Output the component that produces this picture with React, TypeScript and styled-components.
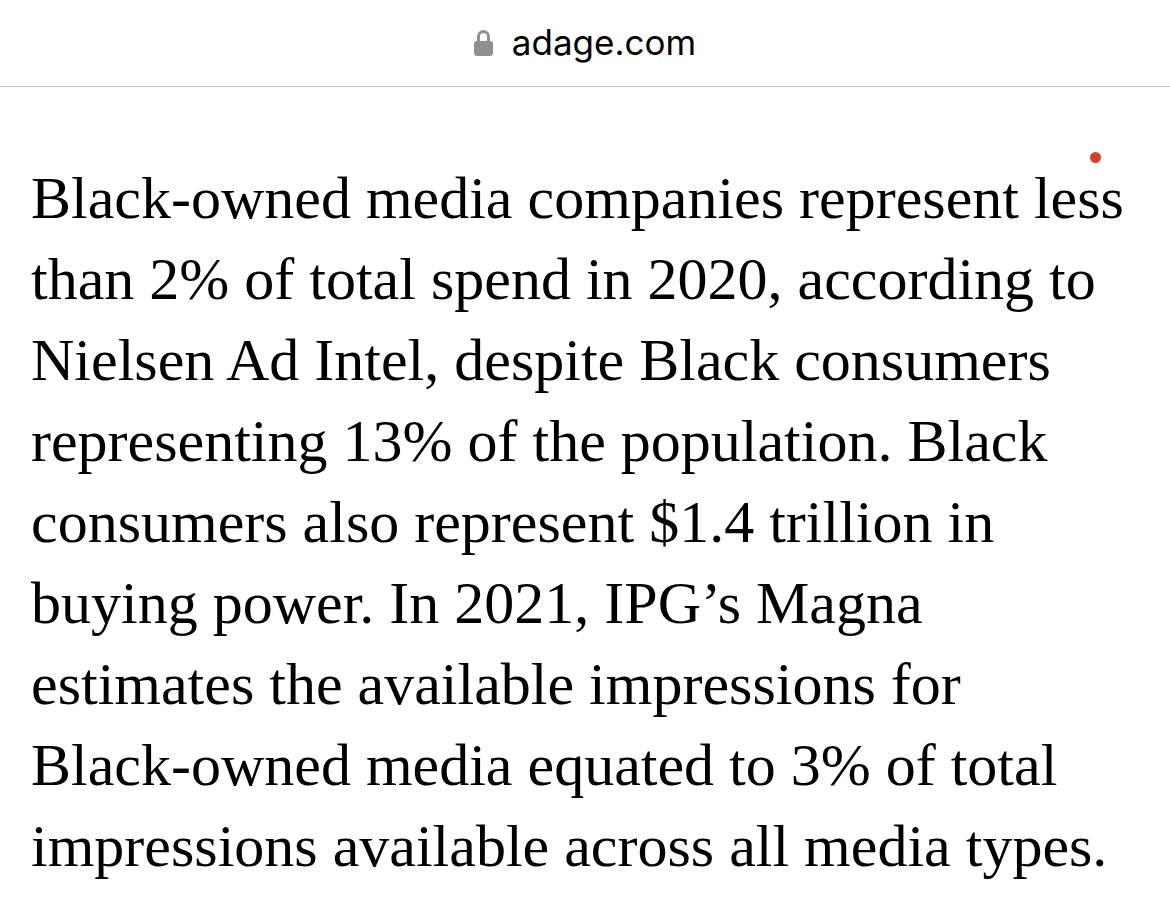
import React from 'react';
import styled, { createGlobalStyle } from 'styled-components';

const lines = [
  'Black-owned media companies represent less',
  'than 2% of total spend in 2020, according to',
  'Nielsen Ad Intel, despite Black consumers',
  'representing 13% of the population. Black',
  'consumers also represent $1.4 trillion in',
  'buying power. In 2021, IPG’s Magna',
  'estimates the available impressions for',
  'Black-owned media equated to 3% of total',
  'impressions available across all media types.',
];

const GlobalStyle = createGlobalStyle`
  html, body {
    margin: 0;
    padding: 0;
    background: #fff;
  }
`;

const Page = styled.div`
  position: relative;
  width: 1170px;
  height: 901px;
  overflow: hidden;
  background: #fff;
`;

const AddressBar = styled.header`
  display: flex;
  align-items: center;
  justify-content: center;
  gap: 19px;
  height: 87px;
  box-sizing: border-box;
  padding-bottom: 2px;
  border-bottom: 1px solid #c4c4c6;
`;

const Domain = styled.span`
  font-family: Inter, 'Liberation Sans', sans-serif;
  font-size: 35px;
  line-height: 42px;
  color: #000;
`;

const Article = styled.main`
  padding: 71px 0 0 31px;
`;

const Paragraph = styled.p`
  margin: 0;
  font-family: 'Liberation Serif', 'Times New Roman', serif;
  font-size: 60px;
  line-height: 81px;
  color: #000;
`;

const Line = styled.span`
  display: block;
  white-space: nowrap;
`;

const Dot = styled.span`
  position: absolute;
  left: 1090px;
  top: 152px;
  width: 11px;
  height: 11px;
  border-radius: 50%;
  background: #d6402b;
`;

const LockIcon: React.FC = () => (
  <svg width="19" height="28" viewBox="0 0 19 28" aria-hidden="true">
    <path
      d="M4.5 13V8.5a5 5 0 0 1 10 0V13"
      fill="none"
      stroke="#8e8e93"
      strokeWidth="3"
    />
    <rect x="0" y="13" width="19" height="15" rx="3" fill="#8e8e93" />
  </svg>
);

const App: React.FC = () => {
  return (
    <Page>
      <GlobalStyle />
      <AddressBar>
        <LockIcon />
        <Domain>adage.com</Domain>
      </AddressBar>
      <Article>
        <Paragraph>
          {lines.map((line) => (
            <Line key={line}>{line}</Line>
          ))}
        </Paragraph>
      </Article>
      <Dot />
    </Page>
  );
};

export default App;
